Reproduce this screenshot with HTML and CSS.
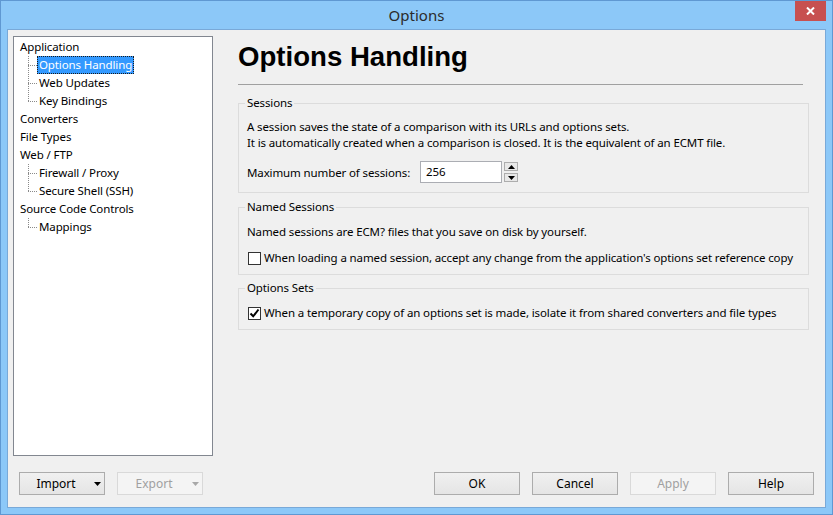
FILE: index.html
```html
<!DOCTYPE html>
<html lang="en">
<head>
  <meta charset="UTF-8" />
  <title>Options</title>
  <link rel="stylesheet" href="styles.css">
</head>
<body>
  <div class="window">
    <div class="titlebar">
      <span></span>
      <span class="title">Options</span>
      <button class="close" aria-label="Close">
        <svg width="9" height="8" viewBox="0 0 9 8"><path d="M1 0.5 L8 7.5 M8 0.5 L1 7.5" stroke="#fff" stroke-width="2"/></svg>
      </button>
    </div>

    <div class="client">
      <div class="main">
        <ul class="tree">
          <li class="node"><span class="label">Application</span></li>
          <li class="child"><span class="elbow"></span><span class="label selected">Options Handling</span></li>
          <li class="child"><span class="elbow"></span><span class="label">Web Updates</span></li>
          <li class="child last"><span class="elbow"></span><span class="label">Key Bindings</span></li>
          <li class="node"><span class="label">Converters</span></li>
          <li class="node"><span class="label">File Types</span></li>
          <li class="node"><span class="label">Web / FTP</span></li>
          <li class="child"><span class="elbow"></span><span class="label">Firewall / Proxy</span></li>
          <li class="child last"><span class="elbow"></span><span class="label">Secure Shell (SSH)</span></li>
          <li class="node"><span class="label">Source Code Controls</span></li>
          <li class="child last"><span class="elbow"></span><span class="label">Mappings</span></li>
        </ul>

        <div class="content">
          <h1>Options Handling</h1>
          <hr class="rule">

          <fieldset class="group sessions">
            <legend>Sessions</legend>
            <p>A session saves the state of a comparison with its URLs and options sets.<br>
            It is automatically created when a comparison is closed. It is the equivalent of an ECMT file.</p>
            <div class="field-row">
              <label class="field-label">Maximum number of sessions:</label>
              <span class="textbox">256</span>
              <span class="spin">
                <span class="spin-btn"><svg width="7" height="4" viewBox="0 0 7 4"><path d="M3.5 0 L7 4 L0 4 Z" fill="#000"/></svg></span>
                <span class="spin-btn"><svg width="7" height="4" viewBox="0 0 7 4"><path d="M0 0 L7 0 L3.5 4 Z" fill="#000"/></svg></span>
              </span>
            </div>
          </fieldset>

          <fieldset class="group named">
            <legend>Named Sessions</legend>
            <p>Named sessions are ECM? files that you save on disk by yourself.</p>
            <div class="check-row">
              <span class="check"></span>
              <span>When loading a named session, accept any change from the application's options set reference copy</span>
            </div>
          </fieldset>

          <fieldset class="group sets">
            <legend>Options Sets</legend>
            <div class="check-row">
              <span class="check"><svg width="11" height="11" viewBox="0 0 11 11"><path d="M1.5 5.5 L4.2 8.3 L9.5 1.5" fill="none" stroke="#000" stroke-width="2"/></svg></span>
              <span>When a temporary copy of an options set is made, isolate it from shared converters and file types</span>
            </div>
          </fieldset>
        </div>
      </div>

      <div class="buttons">
        <button class="btn drop"><span class="txt">Import</span><svg width="7" height="4" viewBox="0 0 7 4"><path d="M0 0 L7 0 L3.5 4 Z" fill="#000"/></svg></button>
        <button class="btn drop" disabled><span class="txt">Export</span><svg width="7" height="4" viewBox="0 0 7 4"><path d="M0 0 L7 0 L3.5 4 Z" fill="#a8a8a8"/></svg></button>
        <span class="spacer"></span>
        <button class="btn">OK</button>
        <button class="btn">Cancel</button>
        <button class="btn" disabled>Apply</button>
        <button class="btn">Help</button>
      </div>
    </div>
  </div>
</body>
</html>
```

FILE: styles.css
```css
body {
  margin: 0;
  font-family: 'Noto Sans', sans-serif;
  font-size: 11.5px;
  letter-spacing: -0.12px;
  color: #000;
}

.window {
  width: 833px;
  height: 515px;
  box-sizing: border-box;
  background: #8cc8f8;
  border: 1px solid #5f98d2;
  padding: 0 6px 6px;
  display: flex;
  flex-direction: column;
}

.titlebar {
  height: 28px;
  display: grid;
  grid-template-columns: 1fr auto 1fr;
}

.title {
  line-height: 28px;
  font-size: 15px;
  letter-spacing: 0;
  color: #2b2b2b;
}

.close {
  justify-self: end;
  align-self: start;
  width: 31px;
  height: 20px;
  border: 0;
  padding: 0;
  background: #c75050;
  display: flex;
  align-items: center;
  justify-content: center;
}

.client {
  flex: 1;
  background: #f0f0f0;
  border: 1px solid #79a9d8;
  padding: 6px 0 0 5px;
}

.main {
  display: flex;
  gap: 25px;
}

/* tree */
.tree {
  width: 200px;
  height: 420px;
  box-sizing: border-box;
  margin: 0;
  padding: 1px 0 0 4px;
  list-style: none;
  background: #fff;
  border: 1px solid #828790;
}

.tree li {
  display: flex;
  height: 18px;
}

.label {
  line-height: 16px;
  padding: 0 1px;
  border: 1px solid transparent;
  white-space: nowrap;
}

.label.selected {
  background: #3399ff;
  color: #fff;
  border: 1px dotted #1a1a1a;
}

.elbow {
  flex: none;
  width: 19px;
  height: 18px;
  background:
    repeating-linear-gradient(to bottom, #8a8a8a 0 1px, transparent 1px 2px) 10px 0 / 1px 100% no-repeat,
    repeating-linear-gradient(to right, #8a8a8a 0 1px, transparent 1px 2px) 10px 9px / 9px 1px no-repeat;
}

.last .elbow {
  background-size: 1px 10px, 9px 1px;
}

/* right side */
.content {
  width: 571px;
}

h1 {
  margin: 5px 0 0;
  font-family: 'Liberation Sans', Arial, sans-serif;
  font-size: 27.6px;
  line-height: 32px;
  font-weight: bold;
  letter-spacing: 0;
}

.rule {
  width: 565px;
  margin: 11px 0 0;
  border: 0;
  border-top: 1px solid #a0a0a0;
}

.group {
  margin: 0;
  padding: 0 8px;
  min-width: 0;
  border: 1px solid #dcdcdc;
}

.group legend {
  margin-left: -2px;
  padding: 0 2px;
  line-height: 16px;
}

.group p {
  margin: 0;
  line-height: 16px;
}

.sessions {
  margin-top: 10px;
  padding-bottom: 9px;
}
.sessions p { margin-top: 8px; }

.named {
  margin-top: 6px;
  padding-bottom: 8px;
}
.named p { margin-top: 9px; }
.named .check-row { margin-top: 10px; }

.sets {
  margin-top: 5px;
  padding-bottom: 8px;
}
.sets .check-row { margin-top: 9px; }

.field-row {
  display: flex;
  align-items: center;
  height: 22px;
  margin-top: 10px;
}

.field-label {
  flex: none;
  width: 173px;
  white-space: nowrap;
}

.textbox {
  flex: none;
  width: 82px;
  height: 22px;
  box-sizing: border-box;
  border: 1px solid #abadb3;
  background: #fff;
  padding-left: 5px;
  line-height: 20px;
}

.spin {
  display: flex;
  flex-direction: column;
  gap: 2px;
  margin-left: 2px;
}

.spin-btn {
  width: 14px;
  height: 9px;
  box-sizing: border-box;
  border: 1px solid #adadad;
  background: #e8e8e8;
  display: flex;
  align-items: center;
  justify-content: center;
}

.check-row {
  display: flex;
  align-items: center;
  line-height: 16px;
  white-space: nowrap;
}

.check {
  flex: none;
  width: 13px;
  height: 13px;
  box-sizing: border-box;
  margin: 0 3px 0 1px;
  border: 1px solid #333;
  background: #fff;
  display: flex;
  align-items: center;
  justify-content: center;
}

/* bottom buttons */
.buttons {
  display: flex;
  gap: 12px;
  margin: 16px 11px 0 6px;
}

.spacer {
  flex: 1;
}

.btn {
  width: 86px;
  height: 23px;
  box-sizing: border-box;
  padding: 0;
  border: 1px solid #acacac;
  background: linear-gradient(#f0f0f0, #e5e5e5);
  font-family: inherit;
  font-size: 12px;
  letter-spacing: 0;
  color: #000;
}

.btn:disabled {
  border-color: #d9d9d9;
  background: #f4f4f4;
  color: #a0a0a0;
}

.drop {
  display: flex;
  align-items: center;
}

.drop .txt {
  width: 72px;
  text-align: center;
}

.drop svg {
  margin-left: 2px;
}
```
